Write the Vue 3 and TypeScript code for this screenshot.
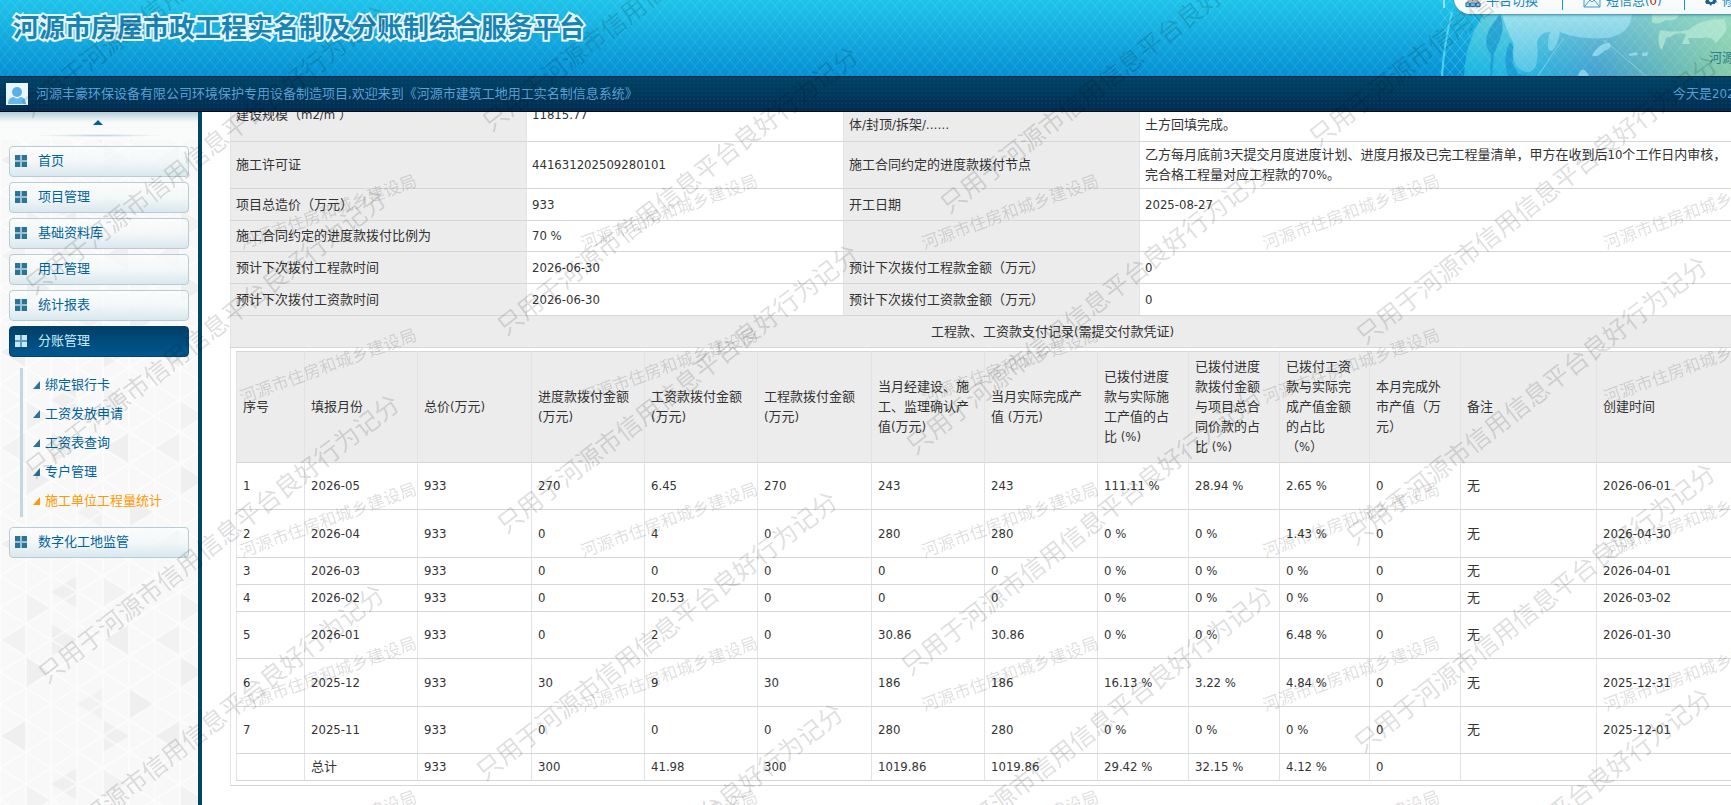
<script setup lang="ts">
interface MenuItem {
  label: string
  active?: boolean
  children?: { label: string; active?: boolean }[]
}

interface InfoRow {
  height: number
  cells: string[]
}

interface PayRow {
  height: number
  cells: string[]
}

const menu: MenuItem[] = [
  { label: '首页' },
  { label: '项目管理' },
  { label: '基础资料库' },
  { label: '用工管理' },
  { label: '统计报表' },
  {
    label: '分账管理',
    active: true,
    children: [
      { label: '绑定银行卡' },
      { label: '工资发放申请' },
      { label: '工资表查询' },
      { label: '专户管理' },
      { label: '施工单位工程量统计', active: true },
    ],
  },
  { label: '数字化工地监管' },
]

const info: InfoRow[] = [
  { height: 53, cells: ['建设规模（m2/m ）', '11815.77', '\u00a0\n体/封顶/拆架/……', '\u00a0\n土方回填完成。'] },
  {
    height: 47,
    cells: [
      '施工许可证',
      '441631202509280101',
      '施工合同约定的进度款拨付节点',
      '乙方每月底前3天提交月度进度计划、进度月报及已完工程量清单，甲方在收到后10个工作日内审核，\n完合格工程量对应工程款的70%。',
    ],
  },
  { height: 32, cells: ['项目总造价（万元）', '933', '开工日期', '2025-08-27'] },
  { height: 31, cells: ['施工合同约定的进度款拨付比例为', '70 %', '', ''] },
  { height: 32, cells: ['预计下次拨付工程款时间', '2026-06-30', '预计下次拨付工程款金额（万元）', '0'] },
  { height: 32, cells: ['预计下次拨付工资款时间', '2026-06-30', '预计下次拨付工资款金额（万元）', '0'] },
]

const columns: string[] = [
  '序号', '填报月份', '总价(万元)', '进度款拨付金额(万元)', '工资款拨付金额(万元)', '工程款拨付金额(万元)',
  '当月经建设、施工、监理确认产值(万元)', '当月实际完成产值 (万元)', '已拨付进度款与实际施工产值的占比 (%)',
  '已拨付进度款拨付金额与项目总合同价款的占比 (%)', '已拨付工资款与实际完成产值金额的占比\n（%）',
  '本月完成外市产值（万元）', '备注', '创建时间',
]

const rows: PayRow[] = [
  { height: 47, cells: ['1', '2026-05', '933', '270', '6.45', '270', '243', '243', '111.11 %', '28.94 %', '2.65 %', '0', '无', '2026-06-01'] },
  { height: 48, cells: ['2', '2026-04', '933', '0', '4', '0', '280', '280', '0 %', '0 %', '1.43 %', '0', '无', '2026-04-30'] },
  { height: 27, cells: ['3', '2026-03', '933', '0', '0', '0', '0', '0', '0 %', '0 %', '0 %', '0', '无', '2026-04-01'] },
  { height: 27, cells: ['4', '2026-02', '933', '0', '20.53', '0', '0', '0', '0 %', '0 %', '0 %', '0', '无', '2026-03-02'] },
  { height: 47, cells: ['5', '2026-01', '933', '0', '2', '0', '30.86', '30.86', '0 %', '0 %', '6.48 %', '0', '无', '2026-01-30'] },
  { height: 48, cells: ['6', '2025-12', '933', '30', '9', '30', '186', '186', '16.13 %', '3.22 %', '4.84 %', '0', '无', '2025-12-31'] },
  { height: 47, cells: ['7', '2025-11', '933', '0', '0', '0', '280', '280', '0 %', '0 %', '0 %', '0', '无', '2025-12-01'] },
  { height: 27, cells: ['', '总计', '933', '300', '41.98', '300', '1019.86', '1019.86', '29.42 %', '32.15 %', '4.12 %', '0', '', ''] },
]

const colWidths: number[] = [68, 113, 114, 113, 113, 114, 113, 113, 91, 91, 90, 91, 136]

// Centre of the first character of every large watermark
const marks: [number, number][] = [
  [34, 104], [38, 281], [38, 465], [51, 670], [36, 860],
  [495, 118], [510, 322], [510, 520], [489, 767], [495, 979],
  [953, 200], [919, 441], [914, 662], [924, 861],
  [1322, 133], [1369, 331], [1359, 532], [1367, 739], [1363, 964],
]

// Centres of the small bureau watermarks
const bureauMarks: [number, number][] = []
for (let x = 328; x < 1900; x += 341) {
  for (let y = 212; y < 900; y += 154) bureauMarks.push([x, y])
}
</script>

<template>
  <div class="page">
    <header class="banner">
      <svg class="banner-art" aria-hidden="true">
        <defs>
          <pattern id="lattice" width="10" height="12" patternUnits="userSpaceOnUse">
            <path d="M0 0L10 12M10 0L0 12" stroke="#fff" stroke-opacity=".1" fill="none" />
          </pattern>
        </defs>
        <rect width="100%" height="100%" fill="url(#lattice)" />
      </svg>
      <svg class="globe" viewBox="0 0 291 76" aria-hidden="true">
        <defs>
          <linearGradient id="sea" x1="0" y1="0" x2="1" y2="0">
            <stop offset="0" stop-color="#14b4e2" />
            <stop offset=".2" stop-color="#22b4e2" />
            <stop offset=".5" stop-color="#3f9fd0" />
            <stop offset=".75" stop-color="#62b4b8" />
            <stop offset="1" stop-color="#84caa6" />
          </linearGradient>
          <linearGradient id="haze" x1="0" y1="0" x2="0" y2="1">
            <stop offset="0" stop-color="#a8ead8" stop-opacity=".6" />
            <stop offset="1" stop-color="#a8ead8" stop-opacity="0" />
          </linearGradient>
          <linearGradient id="land" x1="0" y1="0" x2="0" y2="1">
            <stop offset="0" stop-color="#a6e3ee" stop-opacity=".85" />
            <stop offset="1" stop-color="#6fd0ee" stop-opacity=".6" />
          </linearGradient>
        </defs>
        <path d="M56 0Q26 30 24 76H291V0Z" fill="url(#sea)" />
        <path d="M56 0Q26 30 24 76H291V0Z" fill="url(#haze)" />
        <path d="M12 12Q4 44 2 76" fill="none" stroke="#5cdcf4" stroke-width="2" stroke-opacity=".8" />
        <path d="M4 0V8" stroke="#fff" />
        <path d="M98 76Q112 54 124 38M164 40L206 76" fill="none" stroke="#9fdcee" stroke-opacity=".6" />
        <path d="M60 14Q66 28 58 44L54 54L52 76H50L51 54Q42 44 50 28ZM70 42Q78 50 72 62L78 74L90 76H68Q62 58 70 42Z" fill="#0f8ccb" fill-opacity=".6" />
        <path d="M62 14H192Q190 34 168 38Q138 40 120 32Q116 52 110 51Q106 48 110 32Q98 32 97 44Q99 58 95 68Q88 76 78 68Q70 58 74 44Q66 30 62 14Z" fill="url(#land)" />
        <path d="M152 55Q160 42 170 43Q172 49 164 51Q156 59 152 55ZM188 54L197 52L198 55L190 56ZM202 53L209 52L207 56H202ZM138 76Q142 64 148 74L149 76Z" fill="#9cdff0" fill-opacity=".75" />
        <path d="M212 14H240Q236 22 226 20Q216 26 212 22ZM220 30Q234 33 248 30Q262 18 284 19Q289 28 284 34L276 43Q272 36 262 38L248 38L250 44H242L246 34Q236 32 232 36L226 38L222 50Q216 44 220 30Z" fill="#b8ead6" fill-opacity=".7" />
        <rect width="291" height="76" fill="url(#lattice)" />
      </svg>
      <h1 class="title">河源市房屋市政工程实名制及分账制综合服务平台</h1>
      <nav class="quick">
        <a href="#" class="quick-link">
          <svg class="quick-icon" viewBox="0 0 17 14" aria-hidden="true">
            <path d="M8 0V7M3 10V7H14V10" fill="none" stroke="#7a6a66" />
            <path d="M6 0H11V4H6ZM1 9H5V13H1ZM6 9H11V13H6ZM12 9H16V13H12Z" fill="#7cc4ea" stroke="#17638f" />
          </svg>
          平台切换
        </a>
        <a href="#" class="quick-link">
          <svg class="quick-icon wide" viewBox="0 0 18 14" aria-hidden="true">
            <path d="M1 1H17V13H1ZM1 1L9 8L17 1M1 13L7 6M17 13L11 6" fill="#eef8fd" stroke="#4497c6" />
          </svg>
          <span>短信息(<b class="count">0</b>)</span>
        </a>
        <a href="#" class="quick-link">
          <svg class="quick-icon gear" viewBox="2 0 12 14" aria-hidden="true">
            <path d="M8 1L10 3H13V6L14 8L12 9V10H9L8 12L6 10H3V9L2 8L3 6V3H6Z" fill="#1d6290" />
            <circle cx="8" cy="6" r="2" fill="#fff" />
          </svg>
          修改密码
        </a>
      </nav>
      <div class="region">河源市</div>
    </header>

    <div class="welcome">
      <svg class="avatar" viewBox="0 0 22 22" aria-hidden="true">
        <rect width="22" height="22" fill="#e9f6fd" />
        <circle cx="11" cy="9" r="5" fill="#58b0e6" />
        <path d="M2 21Q2 14 8 14Q11 17 14 14Q20 14 20 21Z" fill="#68b9ea" />
      </svg>
      <span>河源丰豪环保设备有限公司环境保护专用设备制造项目,欢迎来到《河源市建筑工地用工实名制信息系统》</span>
      <span class="today">今天是2026年</span>
    </div>

    <div class="body">
      <aside class="side">
        <svg class="side-art" aria-hidden="true">
          <defs>
            <pattern id="facets" width="154" height="192" patternUnits="userSpaceOnUse">
              <path d="M0 48L26 32V64ZM103 32L129 48L103 64ZM51 96L77 80V112ZM77 144L51 160V128ZM129 128L103 144L129 160ZM26 160L51 176L26 192ZM129 0L154 16L129 32Z" fill="#efefef" />
              <path d="M77 16L103 0V32ZM26 96L51 112L26 128ZM103 80L129 96L103 112ZM0 144L26 128V160Z" fill="#f2f2f2" />
              <path
                d="M0 0V192M26 0V192M51 0V192M77 0V192M103 0V192M129 0V192M0 16L26 0M0 48L77 0M0 80L129 0M0 112L154 16M0 144L154 48M0 176L154 80M26 192L154 112M77 192L154 144M129 192L154 176M129 0L154 16M77 0L154 48M26 0L154 80M0 16L154 112M0 48L154 144M0 80L154 176M0 112L129 192M0 144L77 192M0 176L26 192"
                fill="none" stroke="#fff" stroke-width="2" stroke-opacity=".55" />
            </pattern>
          </defs>
          <rect width="100%" height="100%" fill="url(#facets)" />
        </svg>
        <button type="button" class="scroll-up" aria-label="向上滚动">
          <svg viewBox="0 0 10 5" width="10" height="5" aria-hidden="true"><path d="M0 5L5 0L10 5Z" fill="#00609c" /></svg>
        </button>
        <nav class="menu">
          <template v-for="item in menu" :key="item.label">
            <a href="#" class="menu-item" :class="{ active: item.active }">
              <svg class="tiles" viewBox="0 0 12 12" aria-hidden="true">
                <path d="M0 0H5V5H0ZM7 0H12V5H7ZM0 7H5V12H0ZM7 7H12V12H7Z" />
              </svg>
              {{ item.label }}
            </a>
            <div v-if="item.children" class="submenu">
              <a v-for="child in item.children" :key="child.label" href="#" class="sub-item" :class="{ active: child.active }">
                <svg class="corner" viewBox="0 0 7 8" aria-hidden="true"><path d="M7 0V8H0Z" /></svg>
                {{ child.label }}
              </a>
            </div>
          </template>
        </nav>
      </aside>

      <main class="main">
        <table class="info">
          <colgroup>
            <col class="c-label"><col class="c-value"><col class="c-label"><col>
          </colgroup>
          <tbody>
            <tr v-for="(row, i) in info" :key="i" :style="{ height: row.height + 'px' }">
              <template v-for="(cell, j) in row.cells" :key="j">
                <th v-if="j % 2 === 0" scope="row">{{ cell }}</th>
                <td v-else>{{ cell }}</td>
              </template>
            </tr>
            <tr class="caption-row">
              <th colspan="4" scope="colgroup">工程款、工资款支付记录(需提交付款凭证)</th>
            </tr>
            <tr>
              <td colspan="4" class="holder">
                <table class="pay">
                  <colgroup>
                    <col v-for="(w, i) in colWidths" :key="i" :style="{ width: w + 'px' }"><col>
                  </colgroup>
                  <thead>
                    <tr><th v-for="c in columns" :key="c" scope="col">{{ c }}</th></tr>
                  </thead>
                  <tbody>
                    <tr v-for="(row, i) in rows" :key="i" :style="{ height: row.height + 'px' }">
                      <td v-for="(cell, j) in row.cells" :key="j">{{ cell }}</td>
                    </tr>
                  </tbody>
                </table>
              </td>
            </tr>
          </tbody>
        </table>
      </main>
    </div>

    <svg class="marks" aria-hidden="true">
      <defs>
        <clipPath id="main-area"><rect x="202" y="112" width="4000" height="4000" /></clipPath>
      </defs>
      <text v-for="([x, y], i) in marks" :key="'m' + i" class="mark" :transform="`translate(${x} ${y}) rotate(-38)`" x="-12" y="9">只用于河源市信用信息平台良好行为记分</text>
      <g clip-path="url(#main-area)">
        <text v-for="([x, y], i) in bureauMarks" :key="'b' + i" class="bureau" :transform="`translate(${x} ${y}) rotate(-20)`" y="6">河源市住房和城乡建设局</text>
      </g>
    </svg>
  </div>
</template>

<style>
body {
  margin: 0;
  overflow: hidden;
}
</style>

<style scoped>
.page {
  position: relative;
  display: flex;
  flex-direction: column;
  height: 100vh;
  overflow: hidden;
  background: #fff;
  color: #333;
  font: 13px/20px "DejaVu Sans Condensed", "Noto Sans CJK SC", sans-serif;
}
.page a {
  color: inherit;
  text-decoration: none;
}
.banner {
  position: relative;
  flex: none;
  height: 76px;
  overflow: hidden;
  background: linear-gradient(#1fc4ea, #058fd3);
}
.banner-art,
.globe {
  position: absolute;
  top: 0;
  right: 0;
  width: 100%;
  height: 100%;
}
.globe {
  width: 291px;
}
.title {
  position: relative;
  margin: 0;
  padding: 9px 0 0 13px;
  color: #1884b3;
  font-size: 26px;
  line-height: 38px;
  font-weight: 700;
  white-space: nowrap;
  -webkit-text-stroke: 4px #e4f6fc;
  paint-order: stroke fill;
}
.quick {
  position: absolute;
  top: -12px;
  left: calc(100% - 277px);
  display: flex;
  align-items: center;
  width: 460px;
  height: 26px;
  border-radius: 0 0 0 16px;
  background: linear-gradient(#fff, #f4f8f9);
  box-shadow: 0 1px 3px #2d83a4;
  color: #1487bd;
}
.quick-link {
  display: flex;
  align-items: center;
  gap: 5px;
  height: 40px;
  padding-left: 11px;
  line-height: 26px;
  white-space: nowrap;
}
.quick-link + .quick-link {
  width: 102px;
  padding-left: 20px;
}
.quick-link:first-child {
  width: 98px;
}
.quick-link + .quick-link::before {
  content: "";
  width: 1px;
  height: 18px;
  margin-left: -21px;
  margin-right: 15px;
  background: #1599cc;
}
.quick-icon {
  flex: none;
  width: 16px;
  height: 14px;
}
.quick-icon.wide {
  width: 18px;
}
.quick-icon.gear {
  width: 12px;
}
.count {
  color: #b02a10;
  font-weight: 400;
}
.region {
  position: absolute;
  top: 48px;
  left: calc(100% - 22px);
  color: #2c8087;
  white-space: nowrap;
}
.welcome {
  position: relative;
  flex: none;
  display: flex;
  align-items: center;
  gap: 8px;
  box-sizing: border-box;
  height: 36px;
  padding-left: 6px;
  overflow: hidden;
  border-top: 1px solid #02263f;
  border-bottom: 1px solid #000a12;
  background:
    radial-gradient(circle, #0d557744 0 1px, transparent 1px) 0 0 / 4px 4px,
    linear-gradient(#004366, #002c50);
  color: #5c9fd2;
  white-space: nowrap;
}
.avatar {
  flex: none;
  width: 22px;
  height: 22px;
}
.today {
  position: absolute;
  left: calc(100% - 58px);
}
.body {
  flex: 1;
  display: flex;
  min-height: 0;
}
.side {
  position: relative;
  flex: none;
  width: 198px;
  border-right: 4px solid #004466;
  background: #f8f8f8;
  color: #00639b;
}
.side-art {
  position: absolute;
  inset: 0;
  width: 100%;
  height: 100%;
}
.scroll-up {
  position: relative;
  display: flex;
  justify-content: center;
  width: 100%;
  height: 28px;
  padding: 8px 2px 0 0;
  border: 0;
  background:
    radial-gradient(closest-side, #c5d6dc, transparent) 50% 22px / 130px 3px no-repeat,
    linear-gradient(#b5cfd9, #f8fafa 10px, #fbfbfb);
}
.menu {
  position: relative;
  display: flex;
  flex-direction: column;
  gap: 5px;
  padding: 6px 9px;
}
.menu-item {
  display: flex;
  align-items: center;
  gap: 11px;
  box-sizing: border-box;
  height: 31px;
  padding: 0 5px 1px;
  border: 1px solid #b7cdd6;
  border-radius: 4px;
  background: linear-gradient(#fdfefe99, #f3f7f8cc 50%, #d9e8ee);
}
.menu-item.active {
  border-color: #00456f;
  background: linear-gradient(#003f69, #00588f);
  color: #c9ebfb;
}
.tiles {
  width: 12px;
  height: 12px;
  fill: #2b7499;
  background: #9cc1d2;
}
.active .tiles {
  fill: #c8e9f8;
  background: #5f9cc1;
}
.submenu {
  display: flex;
  flex-direction: column;
  gap: 9px;
  margin: 6px 0 5px 11px;
  padding: 7px 0 6px 10px;
  border-left: 3px solid #c0d8e2;
}
.sub-item {
  display: flex;
  align-items: center;
  gap: 5px;
}
.sub-item.active {
  color: #ff9900;
}
.corner {
  width: 7px;
  height: 8px;
  fill: #2b7499;
}
.active .corner {
  fill: #ff9900;
}
.main {
  flex: 1;
  min-width: 0;
  overflow: hidden;
}
table {
  border-collapse: collapse;
  table-layout: fixed;
}
th,
td {
  box-sizing: border-box;
  padding: 0 5px;
  border: 1px solid #e0e4e8;
  border-top-color: #d6d6d6;
  border-bottom-color: #d6d6d6;
  font-weight: 400;
  text-align: left;
}
th {
  background: #ececec;
}
.info {
  width: calc(100% + 116px);
  margin: -24px 0 0 28px;
}
.info > tbody > tr > th,
.info > tbody > tr > td {
  white-space: pre;
}
.c-label {
  width: 296px;
}
.c-value {
  width: 317px;
}
.info .caption-row {
  height: 32px;
}
.info .caption-row th {
  text-align: center;
}
.info > tbody > tr > .holder {
  padding: 3px 5px 4px;
  white-space: normal;
}
.pay {
  width: 100%;
}
.pay thead tr {
  height: 111px;
}
.pay th,
.pay td {
  padding-left: 6px;
}
.pay thead th {
  padding-right: 8px;
  white-space: pre-line;
}
.marks {
  position: absolute;
  inset: 0;
  width: 100%;
  height: 100%;
  pointer-events: none;
}
.mark {
  font-size: 25px;
  fill: #000;
  fill-opacity: .14;
}
.bureau {
  font-size: 17px;
  fill: #000;
  fill-opacity: .14;
  text-anchor: middle;
}
</style>
